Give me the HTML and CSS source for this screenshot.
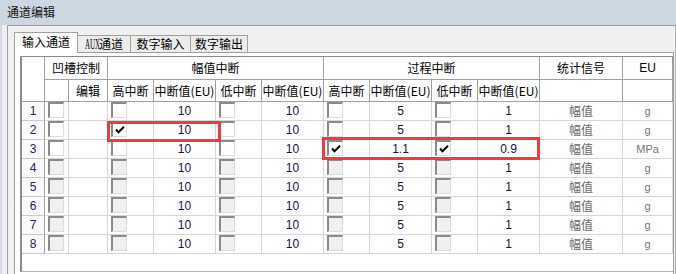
FILE: index.html
```html
<!DOCTYPE html>
<html lang="zh-CN">
<head>
<meta charset="utf-8">
<title>通道编辑</title>
<link rel="stylesheet" href="styles.css">
</head>
<body>
<div class="titlebar">通道编辑</div>
<div class="frame">
  <div class="strip"></div>
  <div class="client">
    <div class="tabs">
      <div class="tab active w1">输入通道</div>
      <div class="tab w2"><span class="aux">AUX</span>通道</div>
      <div class="tab w3">数字输入</div>
      <div class="tab w4">数字输出</div>
    </div>
    <div class="panel">
      <div class="grid">
        <table>
          <colgroup>
            <col class="c-rh"><col class="c-cb"><col class="c-ed">
            <col class="c-cb2"><col class="c-val"><col class="c-cb2"><col class="c-val">
            <col class="c-cb2"><col class="c-val"><col class="c-cb2"><col class="c-val">
            <col class="c-sig"><col class="c-eu">
          </colgroup>
          <thead>
            <tr class="hr1">
              <th rowspan="2" class="corner"></th>
              <th colspan="2">凹槽控制</th>
              <th colspan="4">幅值中断</th>
              <th colspan="4">过程中断</th>
              <th>统计信号</th>
              <th class="lat">EU</th>
            </tr>
            <tr class="hr2">
              <th></th><th>编辑</th>
              <th>高中断</th><th>中断值(EU)</th><th>低中断</th><th>中断值(EU)</th>
              <th>高中断</th><th>中断值(EU)</th><th>低中断</th><th>中断值(EU)</th>
              <th></th><th></th>
            </tr>
          </thead>
          <tbody>
            <tr>
              <td class="rh">1</td><td class="cbc"><span class="cb"></span></td><td></td>
              <td class="cbc"><span class="cb"></span></td><td class="num">10</td><td class="cbc"><span class="cb"></span></td><td class="num">10</td>
              <td class="cbc"><span class="cb"></span></td><td class="num">5</td><td class="cbc"><span class="cb"></span></td><td class="num">1</td>
              <td class="sig">幅值</td><td class="unit">g</td>
            </tr>
            <tr>
              <td class="rh">2</td><td class="cbc"><span class="cb"></span></td><td></td>
              <td class="cbc"><span class="cb"><svg class="tick" viewBox="0 0 10 8" width="10" height="8"><polyline points="1,3.5 3.5,6.2 9,0.8"/></svg></span></td><td class="num">10</td><td class="cbc"><span class="cb"></span></td><td class="num">10</td>
              <td class="cbc"><span class="cb"></span></td><td class="num">5</td><td class="cbc"><span class="cb"></span></td><td class="num">1</td>
              <td class="sig">幅值</td><td class="unit">g</td>
            </tr>
            <tr>
              <td class="rh">3</td><td class="cbc"><span class="cb"></span></td><td></td>
              <td class="cbc"><span class="cb"></span></td><td class="num">10</td><td class="cbc"><span class="cb"></span></td><td class="num">10</td>
              <td class="cbc"><span class="cb"><svg class="tick" viewBox="0 0 10 8" width="10" height="8"><polyline points="1,3.5 3.5,6.2 9,0.8"/></svg></span></td><td class="num">1.1</td>
              <td class="cbc"><span class="cb"><svg class="tick" viewBox="0 0 10 8" width="10" height="8"><polyline points="1,3.5 3.5,6.2 9,0.8"/></svg></span></td><td class="num">0.9</td>
              <td class="sig">幅值</td><td class="unit">MPa</td>
            </tr>
            <tr class="off">
              <td class="rh">4</td><td class="cbc"><span class="cb"></span></td><td></td>
              <td class="cbc"><span class="cb"></span></td><td class="num">10</td><td class="cbc"><span class="cb"></span></td><td class="num">10</td>
              <td class="cbc"><span class="cb"></span></td><td class="num">5</td><td class="cbc"><span class="cb"></span></td><td class="num">1</td>
              <td class="sig">幅值</td><td class="unit">g</td>
            </tr>
            <tr class="off">
              <td class="rh">5</td><td class="cbc"><span class="cb"></span></td><td></td>
              <td class="cbc"><span class="cb"></span></td><td class="num">10</td><td class="cbc"><span class="cb"></span></td><td class="num">10</td>
              <td class="cbc"><span class="cb"></span></td><td class="num">5</td><td class="cbc"><span class="cb"></span></td><td class="num">1</td>
              <td class="sig">幅值</td><td class="unit">g</td>
            </tr>
            <tr class="off">
              <td class="rh">6</td><td class="cbc"><span class="cb"></span></td><td></td>
              <td class="cbc"><span class="cb"></span></td><td class="num">10</td><td class="cbc"><span class="cb"></span></td><td class="num">10</td>
              <td class="cbc"><span class="cb"></span></td><td class="num">5</td><td class="cbc"><span class="cb"></span></td><td class="num">1</td>
              <td class="sig">幅值</td><td class="unit">g</td>
            </tr>
            <tr class="off">
              <td class="rh">7</td><td class="cbc"><span class="cb"></span></td><td></td>
              <td class="cbc"><span class="cb"></span></td><td class="num">10</td><td class="cbc"><span class="cb"></span></td><td class="num">10</td>
              <td class="cbc"><span class="cb"></span></td><td class="num">5</td><td class="cbc"><span class="cb"></span></td><td class="num">1</td>
              <td class="sig">幅值</td><td class="unit">g</td>
            </tr>
            <tr class="off">
              <td class="rh">8</td><td class="cbc"><span class="cb"></span></td><td></td>
              <td class="cbc"><span class="cb"></span></td><td class="num">10</td><td class="cbc"><span class="cb"></span></td><td class="num">10</td>
              <td class="cbc"><span class="cb"></span></td><td class="num">5</td><td class="cbc"><span class="cb"></span></td><td class="num">1</td>
              <td class="sig">幅值</td><td class="unit">g</td>
            </tr>
          </tbody>
        </table>
        <div class="mark mark-a"></div>
        <div class="mark mark-b"></div>
      </div>
    </div>
  </div>
</div>
</body>
</html>
```
FILE: styles.css
```css
* { box-sizing: border-box; }
html, body { margin: 0; padding: 0; }
body {
  width: 676px;
  height: 274px;
  overflow: hidden;
  background: #f0f0f0;
  font-family: "Noto Sans CJK SC", "Noto Sans", sans-serif;
  font-size: 12px;
  color: #000;
}
.titlebar {
  height: 25px;
  background: #cdd7e2;
  padding-left: 7px;
  line-height: 23px;
  color: #111;
}
.frame { display: flex; height: 249px; }
.strip { width: 2px; flex: none; background: #d3dce6; }
.client {
  flex: 1;
  margin-left: 5px;
  border-left: 1px solid #a0a0a0;
  border-top: 1px solid #a0a0a0;
  border-right: 1px solid #b0b0b0;
  background: #f0f0f0;
  display: flex;
  flex-direction: column;
}
.tabs {
  display: flex;
  align-items: flex-end;
  height: 20px;
  margin: 6px 0 0 6px;
  flex: none;
}
.tab {
  height: 17px;
  margin-left: -1px;
  border: 1px solid #a0a0a0;
  border-bottom: none;
  background: #ececec;
  text-align: center;
  line-height: 15px;
  white-space: nowrap;
}
.tab.active {
  height: 21px;
  margin-left: 0;
  margin-bottom: -1px;
  background: #fff;
  position: relative;
  z-index: 1;
  line-height: 18px;
}
.w1 { width: 64px; }
.w2 { width: 54px; }
.w3 { width: 61px; }
.w4 { width: 58px; }
.aux {
  display: inline-block;
  width: 14px;
  font-family: "Liberation Serif", serif;
  font-size: 14px;
  line-height: 15px;
  transform: scaleX(0.5);
  transform-origin: left center;
  vertical-align: baseline;
  text-align: left;
}
.panel {
  flex: 1;
  margin: 0 1px 0 6px;
  border: 1px solid #a0a0a0;
  border-bottom: none;
  background: #fff;
  padding: 3px 0 0 5px;
}
.grid {
  position: relative;
  height: 216px;
  border-left: 2px solid #8c8c8c;
  border-top: 1px solid #8c8c8c;
  border-bottom: 1px solid #b4b4b4;
  background: #fff;
  overflow: hidden;
}
table {
  border-collapse: separate;
  border-spacing: 0;
  table-layout: fixed;
  width: 651px;
}
.c-rh { width: 23px; }
.c-cb { width: 24px; }
.c-ed { width: 39px; }
.c-cb2 { width: 46px; }
.c-val { width: 62px; }
.c-sig { width: 83px; }
.c-eu { width: 50px; }
th, td {
  padding: 0;
  border-right: 1px solid #d6d6d6;
  border-bottom: 1px solid #d6d6d6;
  text-align: center;
  font-weight: normal;
  white-space: nowrap;
  overflow: hidden;
  line-height: 14px;
}
th { border-color: #a0a0a0; background: #fff; }
.hr1 { height: 23px; }
.hr2 { height: 22px; }
tbody tr { height: 19px; }
th.lat { font-family: "Liberation Sans", sans-serif; }
.rh {
  background: #fafafa;
  border-right-color: #a0a0a0;
  border-bottom-color: #c8c8c8;
  color: #24245e;
  font-family: "Liberation Sans", sans-serif;
}
.num {
  font-family: "Liberation Sans", sans-serif;
  color: #14143a;
}
.sig { color: #6a6a6a; }
.unit {
  font-family: "Liberation Sans", sans-serif;
  font-size: 11px;
  color: #747484;
}
.cbc {
  vertical-align: top;
  text-align: left;
  padding-left: 3px;
}
.cb {
  display: block;
  width: 16px;
  height: 16px;
  border-top: 2px solid #8a8a8a;
  border-left: 2px solid #8a8a8a;
  border-right: 1px solid #dcdcdc;
  border-bottom: 1px solid #dcdcdc;
  background: #fff;
}
.off .cb { background: #f0f0f0; }
.tick {
  display: block;
  margin: 3px 0 0 2px;
  fill: none;
  stroke: #000;
  stroke-width: 2;
}
.mark {
  position: absolute;
  border: 3px solid #ef3b3b;
}
.mark-a { left: 85px; top: 64px; width: 114px; height: 21px; }
.mark-b { left: 300px; top: 80px; width: 218px; height: 23px; }
```
